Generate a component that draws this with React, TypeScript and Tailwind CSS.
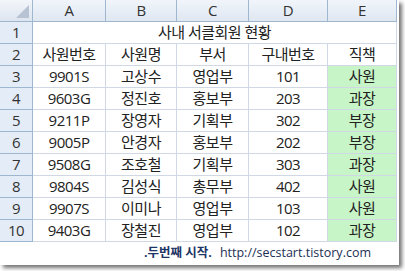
const cols = ["A", "B", "C", "D", "E"];

const rows = [
  ["9901S", "고상수", "영업부", "101", "사원"],
  ["9603G", "정진호", "홍보부", "203", "과장"],
  ["9211P", "장영자", "기획부", "302", "부장"],
  ["9005P", "안경자", "홍보부", "202", "부장"],
  ["9508G", "조호철", "기획부", "303", "과장"],
  ["9804S", "김성식", "총무부", "402", "사원"],
  ["9907S", "이미나", "영업부", "103", "사원"],
  ["9403G", "장철진", "영업부", "102", "과장"],
];

const font = { fontFamily: '"Open Sans", "Noto Sans CJK KR", sans-serif' };

function RowHead({ n }: { n: number }) {
  return (
    <div className="flex items-center justify-center bg-[#e4ecf7] border-r border-b border-[#9eb6ce] text-[15px] text-[#333]">
      {n}
    </div>
  );
}

function Cell({ children, green }: { children?: React.ReactNode; green?: boolean }) {
  return (
    <div
      className={`flex items-center justify-center border-r border-b border-[#d0d7e5] text-[15px] text-[#222] ${
        green ? "bg-[#c8f5c8]" : "bg-white"
      }`}
    >
      {children}
    </div>
  );
}

export default function App() {
  return (
    <div className="w-[405px] h-[271px] bg-white overflow-hidden" style={font}>
      <div className="w-[399px] h-[265px] bg-white shadow-[3px_3px_4px_rgba(0,0,0,0.55)] flex flex-col">
        <div className="grid grid-cols-[33px_73px_71px_72px_79px_69px] auto-rows-[22px] w-[397px] tracking-[-0.5px]">
          {/* corner */}
          <div className="relative bg-gradient-to-b from-[#f3f6fa] to-[#dde5ef] border-r border-b border-[#9eb6ce]">
            <div className="absolute right-[3px] bottom-[3px] w-0 h-0 border-l-[13px] border-l-transparent border-b-[13px] border-b-[#b7c3d2]" />
          </div>
          {cols.map((c) => (
            <div
              key={c}
              className="flex items-center justify-center bg-gradient-to-b from-[#f1f5fb] to-[#dfe7f1] border-r border-b border-[#9eb6ce] text-[15px] text-[#333]"
            >
              {c}
            </div>
          ))}

          <RowHead n={1} />
          <div className="col-span-5 flex items-center justify-center border-r border-b border-[#d0d7e5] text-[15px] text-[#222]">
            사내 서클회원 현황
          </div>

          <RowHead n={2} />
          {["사원번호", "사원명", "부서", "구내번호", "직책"].map((h) => (
            <Cell key={h}>{h}</Cell>
          ))}

          {rows.map((r, i) => (
            <div key={i} className="contents">
              <RowHead n={i + 3} />
              {r.map((v, j) => (
                <Cell key={j} green={j === 4}>
                  {v}
                </Cell>
              ))}
            </div>
          ))}
        </div>
        <div className="flex-1 flex items-center justify-end pr-[28px] gap-[8px] text-[12.5px]">
          <span className="font-bold text-[#1d3566]">.두번째 시작.</span>
          <span className="text-[#1d2f55]">http://secstart.tistory.com</span>
        </div>
      </div>
    </div>
  );
}
